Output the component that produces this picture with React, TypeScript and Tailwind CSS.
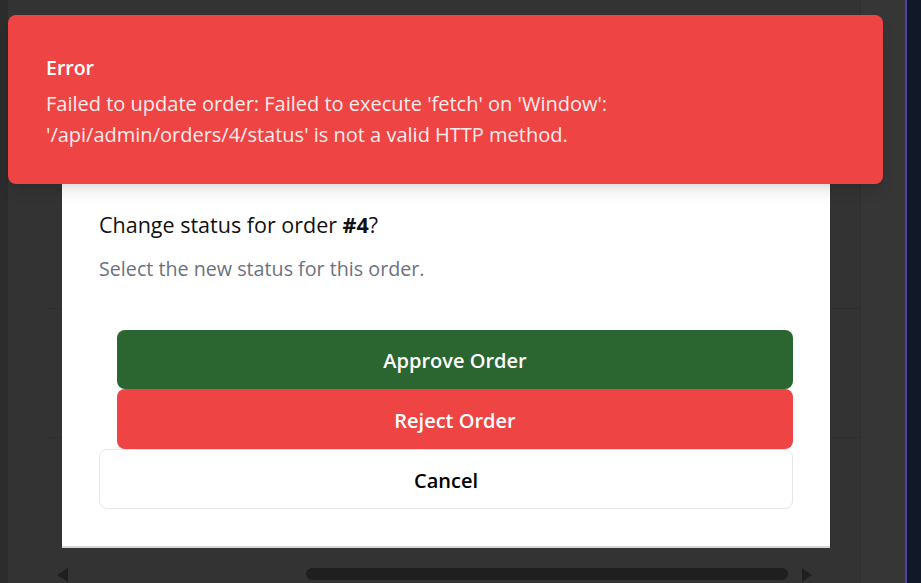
import React from "react";

export default function App() {
  return (
    <div className="relative w-[921px] h-[583px] overflow-hidden bg-[#333333] font-['Open_Sans',sans-serif]">
      {/* background app layout */}
      <div className="flex h-full">
        <div className="w-[8px] bg-[#2c2c2c]" />
        <div className="flex flex-1 flex-col">
          <div className="flex-1 pl-[39px] pt-[308px]">
            <div className="h-[129px] border-t border-[#2e2e2e]" />
            <div className="border-t border-[#2e2e2e]" />
          </div>
          <div className="flex h-[16px] items-start pl-[49px] pr-[48px] pt-[1px]">
            <div className="h-0 w-0 border-y-[7px] border-r-[11px] border-y-transparent border-r-[#1f1f1f]" />
            <div className="flex-1">
              <div className="ml-[238px] h-[12px] w-[482px] rounded-full bg-[#1f1f1f]" />
            </div>
            <div className="h-0 w-0 border-y-[7px] border-l-[10px] border-y-transparent border-l-[#1f1f1f]" />
          </div>
        </div>
        <div className="w-[45px] border-l border-[#2f2f2f] bg-[#363636]" />
        <div className="w-[2px] bg-[#5044a6]" />
        <div className="w-[14px] bg-[#111827]" />
      </div>

      {/* dialog */}
      <div className="absolute left-[62px] top-[150px] w-[768px] border-b-2 border-[#d6d6d6] bg-white px-[37px] pb-[37px] pt-[59px]">
        <h2 className="text-[21.5px] leading-[32px] text-[#111111]">
          Change status for order <span className="font-bold">#4</span>?
        </h2>
        <p className="mt-[14px] text-[19.7px] leading-[28px] text-[#6b7280]">
          Select the new status for this order.
        </p>
        <div className="mt-[47px] flex flex-col">
          <div className="ml-[18px] flex flex-col">
            <button className="h-[59px] rounded-lg bg-[#2b6530] pt-[3px] text-[20px] font-semibold text-white">
              Approve Order
            </button>
            <button className="h-[60px] rounded-lg bg-[#ef4444] pt-[3px] text-[20px] font-semibold text-white">
              Reject Order
            </button>
          </div>
          <button className="h-[60px] rounded-lg border border-[#e5e7eb] bg-white pt-[3px] text-[20px] font-semibold text-black">
            Cancel
          </button>
        </div>
      </div>

      {/* toast */}
      <div className="absolute left-[8px] top-[15px] flex h-[169px] w-[875px] flex-col rounded-lg bg-[#ef4444] px-[38px] pt-[38px] text-white shadow-lg">
        <div className="text-[19.5px] font-semibold leading-[30px]">Error</div>
        <div className="mt-[5px] text-[20px] leading-[31px] opacity-90">
          Failed to update order: Failed to execute 'fetch' on 'Window':
          <br />
          '/api/admin/orders/4/status' is not a valid HTTP method.
        </div>
      </div>
    </div>
  );
}
